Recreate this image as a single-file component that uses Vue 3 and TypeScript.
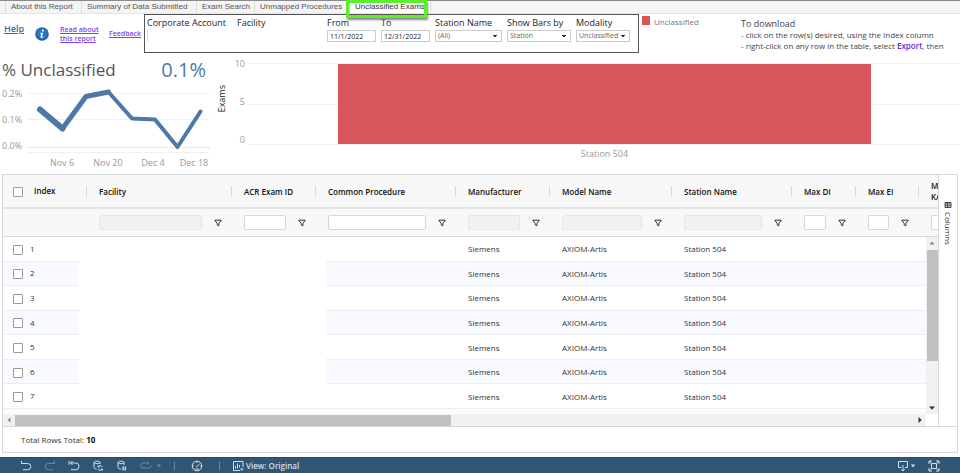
<script setup lang="ts">
import { ref } from 'vue'

interface Column {
  key: string
  label: string
  width: number
  disabled: boolean
}

const tabs = ['About this Report', 'Summary of Data Submitted', 'Exam Search', 'Unmapped Procedures', 'Unclassified Exams']
const fromDate = ref('11/1/2022')
const toDate = ref('12/31/2022')

const columns: Column[] = [
  { key: 'facility', label: 'Facility', width: 145, disabled: true },
  { key: 'exam', label: 'ACR Exam ID', width: 84, disabled: false },
  { key: 'procedure', label: 'Common Procedure', width: 140, disabled: false },
  { key: 'manufacturer', label: 'Manufacturer', width: 94, disabled: true },
  { key: 'model', label: 'Model Name', width: 122, disabled: true },
  { key: 'station', label: 'Station Name', width: 120, disabled: true },
  { key: 'di', label: 'Max DI', width: 64, disabled: false },
  { key: 'ei', label: 'Max EI', width: 63, disabled: false },
  { key: 'kap', label: 'Max KAP', width: 64, disabled: false },
]

const rows: Record<string, string>[] = [1, 2, 3, 4, 5, 6, 7].map((n) => ({
  index: String(n),
  manufacturer: 'Siemens',
  model: 'AXIOM-Artis',
  station: 'Station 504',
}))
</script>

<template>
  <div class="page">
    <nav class="tabs">
      <a v-for="(tab, i) in tabs" :key="tab" href="#" :class="['tab', { active: i === 4 }]">{{ tab }}</a>
      <span class="highlight"></span>
    </nav>

    <header class="top">
      <div class="links">
        <a href="#" class="help">Help</a>
        <svg class="info" viewBox="0 0 14 14" aria-hidden="true">
          <circle cx="7" cy="7" r="6.8" fill="#1f62ae" />
          <circle cx="7" cy="6.4" r="5.6" fill="#2b73bf" />
          <circle cx="7.9" cy="3.6" r="1.1" fill="#fff" />
          <path d="M5.3 5.7h2.8L7.1 9.9l1.3-.3-.3.8c-.8.5-2.9 1-2.6-.4l.8-3.3-1.2-.2z" fill="#fff" />
        </svg>
        <a href="#" class="purple">Read about<br />this report</a>
        <a href="#" class="purple">Feedback</a>
      </div>

      <form class="filters" @submit.prevent>
        <div class="field"><span>Corporate Account</span><i class="caret"></i></div>
        <div class="field"><span>Facility</span></div>
        <div class="field"><label for="from">From</label><input id="from" v-model="fromDate" type="text" /></div>
        <div class="field"><label for="to">To</label><input id="to" v-model="toDate" type="text" /></div>
        <div class="field"><label for="st">Station Name</label><select id="st"><option>(All)</option></select></div>
        <div class="field"><label for="bars">Show Bars by</label><select id="bars"><option>Station</option></select></div>
        <div class="field"><label for="mod">Modality</label><select id="mod"><option>Unclassified</option></select></div>
      </form>

      <div class="legend"><i></i>Unclassified</div>

      <div class="notes">
        <h2>To download</h2>
        <p>- click on the row(s) desired, using the Index column</p>
        <p>- right-click on any row in the table, select <b>Export</b>, then</p>
      </div>
    </header>

    <section class="charts">
      <div class="kpi">
        <div class="kpi-head"><h1>% Unclassified</h1><strong>0.1%</strong></div>
        <svg class="trend" viewBox="0 0 212 86" role="img" aria-label="% Unclassified by week">
          <g stroke="#f0f0f0">
            <path d="M28 8.500H210M28 34.500H210M28 67.500H210M62.500 67v3M108.500 67v3M153.500 67v3M200.500 67v3" />
            <path d="M28 62.500H210" stroke="#dedede" stroke-dasharray="2 1" />
          </g>
          <g fill="none" stroke="#4e79a7" stroke-linejoin="round" stroke-linecap="round">
            <path d="M40 24.500 62.500 43.500" stroke-width="6" />
            <path d="M62.500 43.500 86 11.500 108.500 7" stroke-width="5" />
            <path d="M108.500 7 132 33.500 155 34.500 177.500 62 200.500 26.500" stroke-width="4" />
          </g>
          <g class="axis">
            <text x="2" y="12">0.2%</text>
            <text x="2" y="38">0.1%</text>
            <text x="2" y="64">0.0%</text>
            <g text-anchor="middle">
              <text x="62" y="81">Nov 6</text>
              <text x="108" y="81">Nov 20</text>
              <text x="153" y="81">Dec 4</text>
              <text x="194" y="81">Dec 18</text>
            </g>
          </g>
        </svg>
      </div>

      <div class="bars">
        <div class="ytitle">Exams</div>
        <div class="yaxis"><span>10</span><span>5</span><span>0</span></div>
        <div class="plot"><div class="bar"></div></div>
        <div class="xlabel">Station 504</div>
      </div>
    </section>

    <main class="grid">
      <div class="grid-body">
        <div class="grid-left">
          <div class="view">
            <table>
              <colgroup>
                <col class="index-col" />
                <col v-for="c in columns" :key="c.key" :style="{ width: c.width + 'px' }" />
              </colgroup>
              <thead>
                <tr class="heads">
                  <th class="idx"><input type="checkbox" aria-label="Select all rows" />Index</th>
                  <th v-for="c in columns" :key="c.key">{{ c.label }}</th>
                </tr>
                <tr class="inputs">
                  <td></td>
                  <td v-for="c in columns" :key="c.key">
                    <div class="filter">
                      <input type="text" :disabled="c.disabled" :aria-label="'Filter ' + c.label" />
                      <button type="button" :aria-label="c.label + ' filter options'">
                        <svg viewBox="0 0 8 8"><path d="M.7 1.200h6.600L4.900 4.400v2.400l-1.700-.9V4.400z" /></svg>
                      </button>
                    </div>
                  </td>
                </tr>
              </thead>
              <tbody>
                <tr v-for="row in rows" :key="row.index">
                  <td class="idx"><input type="checkbox" :aria-label="'Select row ' + row.index" />{{ row.index }}</td>
                  <td v-for="c in columns" :key="c.key">{{ row[c.key] }}</td>
                </tr>
              </tbody>
            </table>
            <div class="blank"></div>
            <div class="vscroll">
              <svg viewBox="0 0 8 8"><path d="M1.500 5.500h5L4 2.500z" fill="#888" /></svg>
              <div class="vthumb"></div>
              <svg viewBox="0 0 8 8"><path d="M1 2.500h6L4 5.800z" fill="#333" /></svg>
            </div>
          </div>
          <div class="hscroll">
            <svg viewBox="0 0 8 8"><path d="M5.500 1.500v5L2.500 4z" fill="#888" /></svg>
            <div class="track"><div class="hthumb"></div></div>
            <svg viewBox="0 0 8 8"><path d="M2.500 1v6L5.800 4z" fill="#333" /></svg>
          </div>
        </div>
        <button type="button" class="side">
          <svg viewBox="0 0 8 8"><path d="M1 1.500h6v5H1zM1 3h6M3.500 2v4.500M1 4.800h6" /></svg>
          <span>Columns</span>
        </button>
      </div>
      <div class="status">Total Rows Total: <b>10</b></div>
    </main>

    <footer class="toolbar">
      <button type="button" aria-label="Undo"><svg viewBox="0 0 12 12"><path d="M1.500 1v2.500H4M1.500 3.500h6.200a3 3 0 0 1 0 6.200H3" /></svg></button>
      <button type="button" class="dim" aria-label="Redo"><svg viewBox="0 0 12 12"><path d="M10.500 1v2.500H8M10.500 3.500H4.300a3 3 0 0 0 0 6.200H9" /></svg></button>
      <button type="button" aria-label="Revert"><svg viewBox="0 0 12 12"><path d="M1 .8v4M2.500 3h5.200a3 3 0 0 1 0 6.700H3M4.500 1 2.500 3l2 2" /></svg></button>
      <button type="button" aria-label="Refresh data"><svg viewBox="0 0 12 12"><path d="M8 4V2.500C8 .8 2 .8 2 2.500v5C2 8.500 3 9 4.500 9M2 2.500c0 1.600 6 1.600 6 0M10.300 7a2.300 2.300 0 0 0-4.200 0M6 5.500V7h1.500M6 9a2.300 2.300 0 0 0 4.200 0M10.400 10.500V9H9" /></svg></button>
      <button type="button" aria-label="Pause updates"><svg viewBox="0 0 12 12"><path d="M8 5V2.500C8 .8 2 .8 2 2.500v5C2 8.500 3 9 5 9M2 2.500c0 1.600 6 1.600 6 0" /><path d="M7.200 6.500v4M9.400 6.500v4" stroke-width="1.400" /></svg></button>
      <button type="button" class="dim" aria-label="Replay"><svg viewBox="0 0 12 12"><path d="M8.500 3H3a2 2 0 0 0-2 2v1a2 2 0 0 0 2 2h6a2 2 0 0 0 2-2V5M7.200 1.500 8.700 3 7.200 4.500" /></svg></button>
      <button type="button" class="dim small" aria-label="Replay options"><svg viewBox="0 0 6 6"><path d="M1 1.500h4L3 4.500z" fill="currentColor" stroke="none" /></svg></button>
      <i></i>
      <button type="button" class="gauge" aria-label="Performance"><svg viewBox="0 0 12 12"><circle cx="6" cy="6" r="4.800" /><path d="M5.200 7 8.500 4M6 1.200v1.500M1.200 6h1.500M9.300 6h1.500M4 9h4" /></svg></button>
      <i></i>
      <button type="button" class="view-btn"><svg viewBox="0 0 12 12"><path d="M11 7V1.500H1.500v9H8M3.500 8.500V6M5.500 8.500V3.500M7.500 7.500V5" /><path d="M8 8.500h3.500L9.800 11z" fill="currentColor" stroke="none" /></svg>View: Original</button>
      <span class="spacer"></span>
      <button type="button" class="download" aria-label="Download">
        <svg viewBox="0 0 12 12"><path d="M4 7.500H1.500v-6h9v6H8M6 5v6M4.300 9.300 6 11l1.700-1.700" /></svg>
        <svg class="drop" viewBox="0 0 6 6"><path d="M.8 1.500h4.400L3 4.500z" fill="currentColor" stroke="none" /></svg>
      </button>
      <button type="button" aria-label="Full screen"><svg viewBox="0 0 12 12"><path d="M3.500 3.500h5v5h-5zM1 4V1h3M8 1h3v3M11 8v3H8M4 11H1V8M1 1l2.500 2.500M11 1 8.500 3.500M11 11 8.500 8.500M1 11l2.500-2.500" /></svg></button>
    </footer>
  </div>
</template>

<style>
body {
  margin: 0;
  background: #fff;
}
</style>

<style scoped>
* {
  box-sizing: border-box;
}
.page {
  display: flex;
  flex-direction: column;
  min-height: 100vh;
  overflow: hidden;
  font-family: 'Open Sans', 'Noto Sans', sans-serif;
  font-size: 8px;
  color: #333;
}
h1, h2, p {
  margin: 0;
  font-weight: 400;
}
button, input, select {
  font: inherit;
  color: inherit;
  margin: 0;
  padding: 0;
}
button {
  background: none;
  border: 0;
}
svg {
  display: block;
  flex: none;
}
.tabs {
  position: relative;
  display: grid;
  grid-template-columns: 76px 115px 58px 95px 82px 1fr;
  height: 14px;
  padding-left: 5px;
  background: #f4f4f4;
  border-top: 1px solid #8a8a8c;
  border-bottom: 1px solid #e4e4e4;
  font: 8px/11px 'Liberation Sans', sans-serif;
}
.tab {
  padding-left: 5px;
  border-left: 1px solid #ddd;
  color: #555;
  text-decoration: none;
  white-space: nowrap;
}
.tab.active {
  background: #fff;
  color: #333;
  border-right: 1px solid #ddd;
}
.highlight {
  position: absolute;
  left: 346px;
  top: -1px;
  width: 81px;
  height: 18px;
  border: 3px solid #5cf02c;
  box-shadow: 1px 2px 2px #888;
}
.top {
  display: flex;
  height: 39px;
}
.links {
  display: flex;
  align-items: center;
  width: 144px;
  padding-left: 4px;
}
.help {
  width: 31px;
  padding-bottom: 10px;
  font-size: 9px;
  font-weight: 600;
  color: #3b6b9a;
}
.info {
  width: 14px;
  height: 14px;
  margin-right: 11px;
}
.purple {
  width: 49px;
  font-size: 7px;
  line-height: 9px;
  font-weight: 600;
  color: #7b3ff2;
  white-space: nowrap;
}
.purple + .purple {
  width: 35px;
}
.filters {
  display: grid;
  grid-template-columns: 90px 90px 54px 54px 72px 69px 59px;
  width: 495px;
  padding: 3px 2px;
  border: 1px solid #555;
}
.field {
  display: flex;
  flex-direction: column;
  gap: 2px;
  padding-right: 5px;
  font-size: 9px;
  line-height: 10px;
  white-space: nowrap;
  color: #222;
}
.field input, .field select {
  width: 100%;
  height: 12px;
  padding: 0 2px;
  border: 1px solid #ccc;
  border-radius: 0;
  background: #fff;
  font-size: 7px;
  line-height: 10px;
}
.field select {
  appearance: none;
  color: #666;
  background: linear-gradient(#333, #333) right 4px top 4px / 4px 1px no-repeat,
    linear-gradient(#333, #333) right 5px top 5px / 2px 1px no-repeat, #fff;
}
.caret {
  width: 1px;
  height: 12px;
  background: #ddd;
}
.legend {
  display: flex;
  gap: 4px;
  width: 102px;
  padding: 2px 0 0 3px;
  line-height: 11px;
  color: #777;
}
.legend i {
  width: 8px;
  height: 9px;
  background: #d7575c;
}
.notes {
  line-height: 11px;
  padding-top: 4px;
  white-space: nowrap;
  color: #444;
}
.notes h2 {
  font-size: 9px;
}
.notes b {
  font-weight: 600;
  color: #5a2be0;
}
.charts {
  display: flex;
  height: 121px;
}
.kpi {
  width: 212px;
}
.kpi-head {
  display: flex;
  justify-content: space-between;
  align-items: center;
  height: 32px;
  padding: 0 6px 0 2px;
}
h1 {
  font-size: 17px;
  color: #555;
}
.kpi-head strong {
  font-size: 20px;
  font-weight: 400;
  color: #4e79a7;
}
.trend {
  width: 212px;
  height: 86px;
}
.axis {
  font-size: 9px;
  fill: #999;
}
.bars {
  flex: 1;
  display: grid;
  grid-template-columns: 19px 18px 1fr;
  grid-template-rows: 82px 1fr;
  padding-top: 10px;
}
.ytitle {
  justify-self: center;
  align-self: center;
  writing-mode: vertical-rl;
  transform: rotate(180deg);
  font-size: 9px;
  line-height: 12px;
  padding-top: 10px;
  color: #222;
}
.yaxis {
  display: flex;
  flex-direction: column;
  justify-content: space-between;
  height: 86px;
  margin-top: -4px;
  padding-right: 4px;
  font-size: 9px;
  line-height: 10px;
  text-align: right;
  color: #999;
}
.plot {
  border-top: 1px solid #f3f3f3;
  border-bottom: 1px solid #eee;
  background: linear-gradient(#f3f3f3, #f3f3f3) center / 100% 1px no-repeat;
}
.bar {
  width: 75%;
  height: 100%;
  margin: 0 auto;
  background: #d7575c;
}
.xlabel {
  grid-column: 3;
  text-align: center;
  font-size: 9px;
  line-height: 18px;
  color: #999;
}
.grid {
  flex: 1;
  display: flex;
  flex-direction: column;
  margin: 0 2px 4px;
  border: 1px solid #d5d7dc;
}
.grid-body {
  display: flex;
  flex: 1;
  border-bottom: 1px solid #d5d7dc;
}
.grid-left {
  flex: 1;
  min-width: 0;
  display: flex;
  flex-direction: column;
}
.view {
  position: relative;
  flex: 1;
  overflow: hidden;
  background: #fcfcfc;
}
table {
  width: 980px;
  height: 234px;
  table-layout: fixed;
  border-collapse: separate;
  border-spacing: 0;
}
.index-col {
  width: 84px;
}
th, td {
  position: relative;
  padding: 0 0 0 12px;
  text-align: left;
}
th {
  font-weight: 600;
  line-height: 11px;
  color: #111;
}
.heads th {
  height: 34px;
  background: #f8f8f8;
  border-bottom: 2px solid #e4e5e9;
  white-space: nowrap;
}
.heads th:last-child {
  white-space: normal;
  padding-right: 30px;
}
.heads th::after {
  content: '';
  position: absolute;
  right: 0;
  top: 11px;
  width: 1px;
  height: 11px;
  background: #d8dade;
}
.inputs td {
  height: 28px;
  background: #f8f8f8;
  border-bottom: 1px solid #d5d7dc;
}
.filter {
  display: flex;
  align-items: center;
  gap: 12px;
  padding-right: 10px;
}
.filter input {
  flex: 1;
  min-width: 0;
  height: 15px;
  border: 1px solid #d5d7dc;
  border-radius: 2px;
  background: #fff;
}
.filter input:disabled {
  background: #f0f1f3;
  border-color: #e6e7ea;
}
.filter svg {
  width: 8px;
  height: 8px;
  fill: none;
  stroke: #333;
}
tbody td {
  background: #fff;
  border-bottom: 1px solid #eceef1;
}
tbody tr:nth-child(even) td {
  background: #f9faff;
}
th.idx, td.idx {
  padding-left: 10px;
}
.idx input {
  appearance: none;
  width: 10px;
  height: 10px;
  margin-right: 7px;
  border: 1px solid #999;
  border-radius: 1px;
  background: #fff;
  vertical-align: middle;
}
th.idx input {
  margin-right: 11px;
}
.blank {
  position: absolute;
  left: 76px;
  top: 63px;
  width: 247px;
  height: 168px;
  background: #fff;
}
.vscroll {
  position: absolute;
  right: 0;
  top: 62px;
  bottom: 0;
  width: 12px;
  display: flex;
  flex-direction: column;
  justify-content: space-between;
  align-items: center;
  padding: 2px 0;
  background: #f1f1f1;
}
.vscroll svg, .hscroll svg {
  width: 8px;
  height: 8px;
}
.vthumb {
  width: 11px;
  flex: 0 0 111px;
  margin-bottom: 40px;
  background: #c1c1c1;
}
.hscroll {
  display: flex;
  align-items: center;
  height: 12px;
  margin-right: 12px;
  padding: 0 2px;
  gap: 2px;
  background: #f1f1f1;
}
.track {
  flex: 1;
}
.hthumb {
  width: 48.5%;
  height: 11px;
  background: #c1c1c1;
}
.side {
  display: flex;
  flex-direction: column;
  align-items: center;
  gap: 3px;
  width: 19px;
  padding-top: 26px;
  border-left: 1px solid #d5d7dc;
}
.side svg {
  width: 8px;
  height: 8px;
  fill: none;
  stroke: #444;
}
.side span {
  writing-mode: vertical-rl;
}
.status {
  height: 25px;
  padding-left: 18px;
  line-height: 25px;
}
.status b {
  color: #111;
}
.toolbar {
  display: flex;
  align-items: center;
  height: 16px;
  padding: 0 20px;
  background: #2f5674;
  border-top: 1px solid #244a68;
  color: #d5dfe7;
  gap: 12px;
}
.toolbar svg {
  width: 12px;
  height: 12px;
  fill: none;
  stroke: currentColor;
}
.toolbar .dim {
  color: #6d8ba2;
}
.toolbar .small {
  margin-left: -8px;
}
.toolbar .small svg, .toolbar .drop {
  width: 6px;
  height: 6px;
}
.toolbar i {
  width: 1px;
  height: 8px;
  background: #6d8ba2;
}
.toolbar .gauge {
  padding: 0 4px;
}
.view-btn {
  display: flex;
  align-items: center;
  gap: 2px;
  font-weight: 600;
}
.spacer {
  flex: 1;
}
.download {
  display: flex;
  align-items: center;
  gap: 1px;
}
</style>
